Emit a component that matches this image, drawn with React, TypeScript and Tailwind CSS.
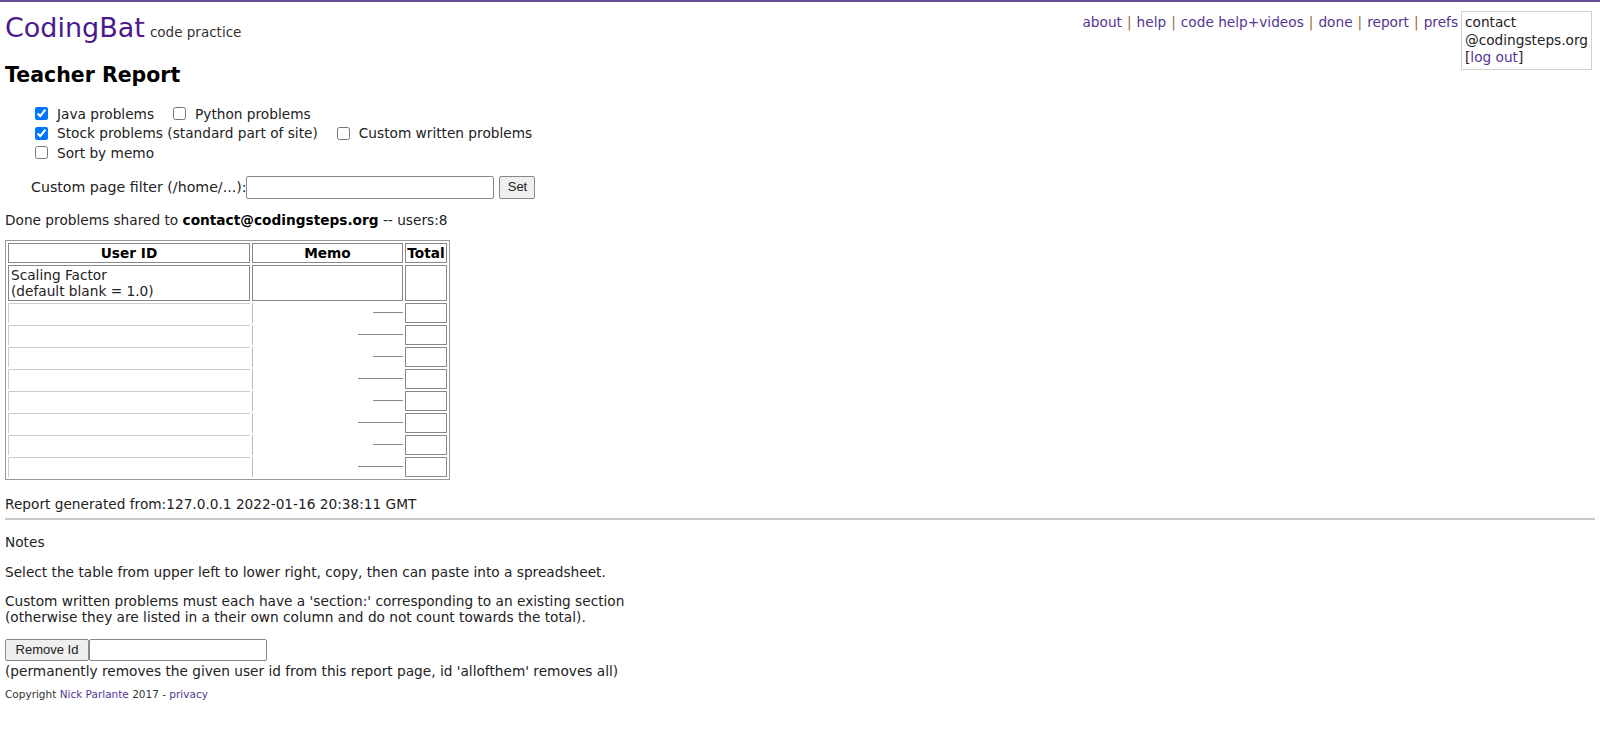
const LINK = "text-[#553592]";

function Sep() {
  return <span className="text-[#9a6a3a] px-[5px]">|</span>;
}

function Check({ label, checked }: { label: string; checked?: boolean }) {
  return (
    <label className="inline-flex items-center mr-[19px]">
      <input type="checkbox" defaultChecked={checked} className="w-[13px] h-[13px] m-0 mr-[9px]" />
      {label}
    </label>
  );
}

const dataRows = [0, 1, 2, 3, 4, 5, 6, 7];

export default function App() {
  return (
    <div className="min-h-[749px] bg-white border-t-2 border-[#664f99] text-[#222] text-[13.7px] leading-[16px] font-['DejaVu_Sans',Verdana,sans-serif]">
      {/* header: logo left, links + account box right */}
      <div className="h-[62px] flex justify-between items-start pl-[5px] pr-[8px]">
        <div className="pt-[11px]">
          <span className="text-[27px] leading-[30px] text-[#4b1a8a]">CodingBat</span>
          <span className="text-[13.5px] text-[#333] ml-[5px]">code practice</span>
        </div>
        <div className="flex items-start pt-[9px]">
          <div className="leading-[20px] pt-[1px]">
            <a className={LINK}>about</a>
            <Sep />
            <a className={LINK}>help</a>
            <Sep />
            <a className={LINK}>code help+videos</a>
            <Sep />
            <a className={LINK}>done</a>
            <Sep />
            <a className={LINK}>report</a>
            <Sep />
            <a className={LINK}>prefs</a>
          </div>
          <div className="ml-[3px] border border-[#d0d0d0] px-[3px] py-[2px] leading-[17.5px] text-[#222]">
            contact
            <br />
            @codingsteps.org
            <br />
            [<a className={LINK}>log out</a>]
          </div>
        </div>
      </div>

      <div className="px-[5px]">
        <h1 className="text-[20.5px] leading-[22px] font-bold text-black">Teacher Report</h1>

        <div className="mt-[18px] ml-[30px]">
          <div className="h-[19.5px] flex items-center">
            <Check label="Java problems" checked />
            <Check label="Python problems" />
          </div>
          <div className="h-[19.5px] flex items-center">
            <Check label="Stock problems (standard part of site)" checked />
            <Check label="Custom written problems" />
          </div>
          <div className="h-[19.5px] flex items-center">
            <Check label="Sort by memo" />
          </div>
        </div>

        <div className="mt-[13px] ml-[26px] flex items-center">
          <span className="text-[14.2px]">Custom page filter (/home/...):</span>
          <input className="w-[248px] h-[23px] border border-[#888] rounded-[2px] px-1" />
          <button className="ml-[5px] h-[23px] w-[36px] border border-[#888] rounded-[2px] bg-[#efefef] text-[13px] font-['Liberation_Sans',Arial,sans-serif]">
            Set
          </button>
        </div>

        <p className="mt-[13px]">
          Done problems shared to <b className="text-black">contact@codingsteps.org</b> -- users:8
        </p>

        <table className="mt-[12px] border border-[#999] border-separate border-spacing-[2px]">
          <thead>
            <tr className="font-bold text-black">
              <th className="w-[242px] h-[20px] border border-[#888] p-0">User ID</th>
              <th className="w-[151px] border border-[#888] p-0">Memo</th>
              <th className="w-[42px] border border-[#888] p-0">Total</th>
            </tr>
          </thead>
          <tbody>
            <tr>
              <td className="border border-[#888] px-[2px] h-[36px] align-middle">
                Scaling Factor
                <br />
                (default blank = 1.0)
              </td>
              <td className="border border-[#888]"></td>
              <td className="border border-[#888]"></td>
            </tr>
            {dataRows.map((r) => (
              <tr key={r}>
                <td className="h-[20px] border-l border-t border-[#ccc] p-0"></td>
                <td className="border-l border-[#bbb] p-0">
                  <div className="h-full flex justify-end items-end">
                    <div className={r % 2 === 0 ? "w-[30px] border-b border-[#888]" : "w-[45px] border-b border-[#888]"}></div>
                  </div>
                </td>
                <td className="border border-[#888]"></td>
              </tr>
            ))}
          </tbody>
        </table>

        <p className="mt-[16px]">Report generated from:127.0.0.1 2022-01-16 20:38:11 GMT</p>
      </div>

      <hr className="mx-[5px] mt-[6px] border-t-2 border-[#c8c8c8]" />

      <div className="px-[5px]">
        <p className="mt-[14px]">Notes</p>
        <p className="mt-[14px]">Select the table from upper left to lower right, copy, then can paste into a spreadsheet.</p>
        <p className="mt-[13px]">
          Custom written problems must each have a 'section:' corresponding to an existing section
          <br />
          (otherwise they are listed in a their own column and do not count towards the total).
        </p>
        <div className="mt-[14px] flex">
          <button className="h-[22px] w-[84px] border border-[#888] rounded-[2px] bg-[#efefef] text-[13px] font-['Liberation_Sans',Arial,sans-serif]">
            Remove Id
          </button>
          <input className="w-[178px] h-[22px] border border-[#888] rounded-[2px]" />
        </div>
        <p className="mt-[2px]">(permanently removes the given user id from this report page, id 'allofthem' removes all)</p>
        <p className="mt-[9px] text-[10.5px] leading-[12px] text-[#333]">
          Copyright <a className={LINK}>Nick Parlante</a> 2017 - <a className={LINK}>privacy</a>
        </p>
      </div>
    </div>
  );
}
